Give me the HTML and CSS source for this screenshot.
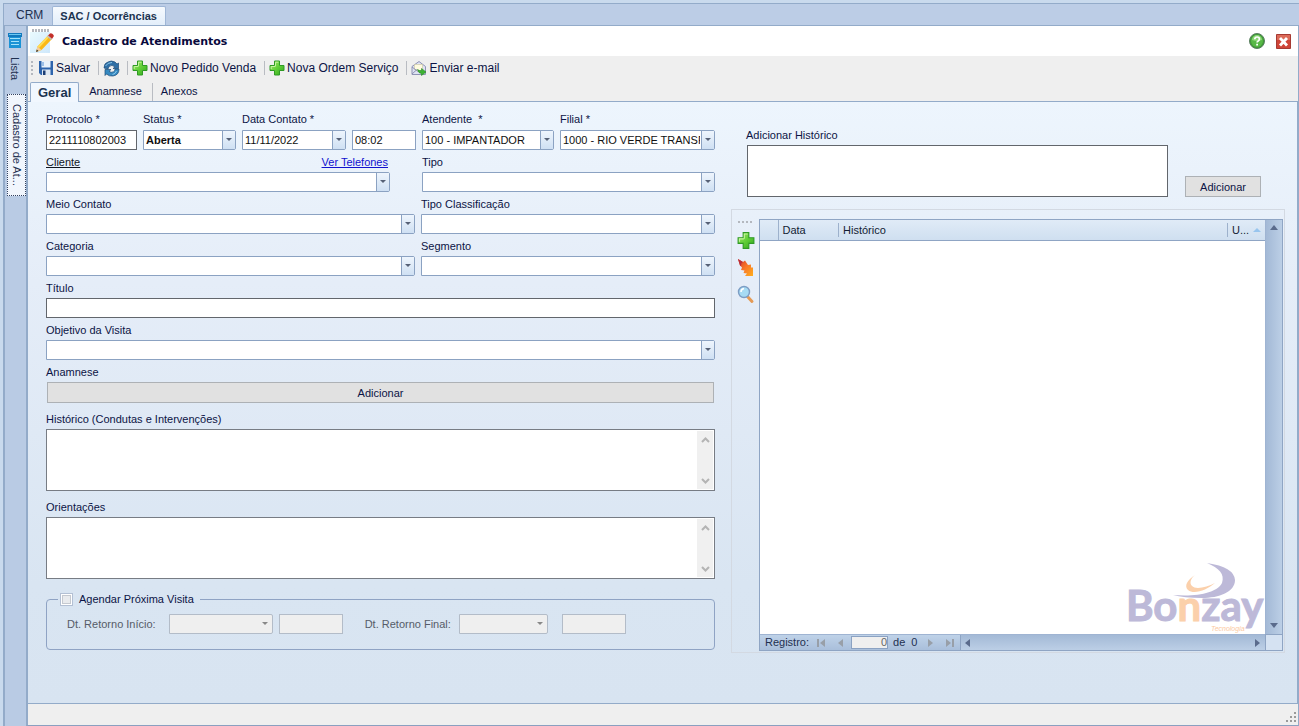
FILE: index.html
```html
<!DOCTYPE html>
<html lang="pt-BR">
<head>
<meta charset="utf-8">
<title>Cadastro de Atendimentos</title>
<link rel="stylesheet" href="styles.css">
</head>
<body>
<svg class="defs" aria-hidden="true">
  <defs>
    <linearGradient id="green" x1="0" y1="0" x2="1" y2="1"><stop offset="0" stop-color="#a5e86a"/><stop offset="0.5" stop-color="#62cf38"/><stop offset="1" stop-color="#2fa51c"/></linearGradient>
    <linearGradient id="fire" x1="0" y1="0" x2="1" y2="1"><stop offset="0" stop-color="#d8352a"/><stop offset="0.5" stop-color="#f8782a"/><stop offset="1" stop-color="#ffae1c"/></linearGradient>
    <linearGradient id="sky" x1="0" y1="0" x2="1" y2="1"><stop offset="0" stop-color="#e9fafe"/><stop offset="1" stop-color="#cfe8fb"/></linearGradient>
    <symbol id="plus" viewBox="0 0 16 16"><path d="M5.5 1h5v4.500H15v5h-4.500V15h-5v-4.500H1v-5h4.500z" fill="url(#green)" stroke="#2f9a24"/><path d="M6.500 6.500V2.200h3M2.200 9V6.500H6" fill="none" stroke="#c4f39c"/></symbol>
  </defs>
</svg>
<div class="app">
  <nav class="module-tabs">
    <button class="module-tab">CRM</button>
    <button class="module-tab active">SAC / Ocorrências</button>
  </nav>
  <div class="workspace">
    <nav class="side">
      <button class="side-tab">
        <svg width="14" height="15" viewBox="0 0 14 15"><path d="M0 0h14v4H0z" fill="#1479bd"/><path d="M1 1h12v1H1z" fill="#6cc9f2"/><path d="M1 4h12v11H1z" fill="#1b93d6"/><path d="M2 5h10v1H2zM3 8h8v1H3zM3 11h8v1H3z" fill="#a4e2fa"/></svg>
        <span>Lista</span>
      </button>
      <button class="side-tab active"><span>Cadastro de At...</span></button>
    </nav>
    <main class="main">
      <header class="title-bar">
        <div class="title-icon">
          <i class="grip-h"></i>
          <svg width="24" height="22" viewBox="0 0 24 22"><path d="M0 0h20v21H0z" fill="url(#sky)"/><path d="M6 20 7.500 14.500 18 3.500l4 3.500L11.500 18z" fill="#fbb816"/><path d="M7.500 14.500 18 3.500l1.500 1.300L9 16z" fill="#ffdd55"/><path d="m18 3.500 2-2q1-.8 2.300.2l1 1q1 1.200 0 2.300L22 7z" fill="#c3302a"/><path d="m17 4.500 1-1L22 7l-1 1z" fill="#b9bcc4"/><path d="m6 20 1.500-5.500 4 3.500z" fill="#f3cfa0"/><path d="m6 20 .8-2.600 1.800 1.700z" fill="#333"/></svg>
        </div>
        <h1>Cadastro de Atendimentos</h1>
        <button class="icon-btn" aria-label="Ajuda"><svg width="16" height="16" viewBox="0 0 16 16"><circle cx="8" cy="8" r="7.500" fill="#3f9a35" stroke="#5b7f63"/><circle cx="8" cy="8" r="6" fill="#58b847"/><path d="M3 7a5 5 0 0 1 10 0q-5 2-10 0z" fill="#8bd677"/><path d="M5.800 6.300q0-2.300 2.300-2.300t2.300 2q0 1.200-1.200 1.900-1.100.6-1.100 1.600" fill="none" stroke="#fff" stroke-width="1.700"/><path d="M7.200 10.800H9v1.700H7.200z" fill="#fff"/></svg></button>
        <button class="icon-btn" aria-label="Fechar"><svg width="15" height="15" viewBox="0 0 15 15"><path d="M.5.5h14v14H.5z" fill="#cf4437" stroke="#a63a33"/><path d="M1 1h13v5H1z" fill="#dc6a58"/><path d="m4 4 7 7.500M11 4l-7 7.500" stroke="#fff" stroke-width="2.800"/></svg></button>
      </header>
      <div class="toolbar">
        <i class="grip-v"></i>
        <button><svg width="16" height="16" viewBox="0 0 16 16"><path d="M1 1h14v14H3l-2-2z" fill="#2d64ad"/><path d="M3.500 1h9v6.500h-9z" fill="#e9f2fb"/><path d="M4 2h2v4H4z" fill="#9dc0e8"/><path d="M4 9.500h8.500V15H4z" fill="#dfe8f2"/><path d="M5 10.500h2.500V15H5z" fill="#1c3e75"/></svg>Salvar</button>
        <i class="sep"></i>
        <button aria-label="Atualizar"><svg width="17" height="17" viewBox="0 0 17 17"><path d="M1 8Q1 3 5 2q3-2 7 0l2 2 1.500-1v5.500H10L12 7Q9 4 6 6.500L5 9z" fill="#2e6fa6" stroke="#1c4a77" stroke-width=".7"/><path d="M16 9q0 6-6 7-4 .5-6.500-2L2 15.500V9.500h6l-2 1.800q2 1.800 4.500.5Q12 11 12 9z" fill="#3589c0" stroke="#1c4a77" stroke-width=".7"/><path d="M2.500 6Q4.500 2.500 9 2.500M13.500 11q-1 3-4 3.500" stroke="#8dc8ec" fill="none"/></svg></button>
        <i class="sep"></i>
        <button><svg width="16" height="16"><use href="#plus"/></svg>Novo Pedido Venda</button>
        <i class="sep"></i>
        <button><svg width="16" height="16"><use href="#plus"/></svg>Nova Ordem Serviço</button>
        <i class="sep"></i>
        <button><svg width="16" height="16" viewBox="0 0 16 16"><path d="M1 6.500 8 1.500l6.500 5v8H1z" fill="#dfe3f4" stroke="#8f93b4"/><path d="M3.500 4.500h8v5l-4 2-4-2z" fill="#fffbe0" stroke="#c9c49a" stroke-width=".6"/><path d="m1 14 5-4.500M1 7l6 4.500" stroke="#8f93b4" fill="none"/><path d="M6.500 9.500q2 1.500 4 1V8.500l4.500 3.500-4.500 3.500v-2q-3 0-4-4z" fill="#3cb233" stroke="#258a22" stroke-width=".6"/></svg>Enviar e-mail</button>
      </div>
      <nav class="page-tabs">
        <button class="active">Geral</button>
        <button>Anamnese</button>
        <i class="sep"></i>
        <button>Anexos</button>
      </nav>
      <section class="page">
        <form class="form">
          <div class="row row-ids">
            <div class="field"><label for="prot">Protocolo *</label><input id="prot" class="box dark" value="2211110802003"></div>
            <div class="field"><label for="status">Status *</label><div class="combo"><select id="status" class="strong"><option>Aberta</option></select><i class="drop"></i></div></div>
            <div class="field"><label for="data">Data Contato *</label><div class="combo"><input id="data" value="11/11/2022"><i class="drop"></i></div></div>
            <div class="field"><label></label><input class="box" aria-label="Hora" value="08:02"></div>
            <div class="field"><label for="atend">Atendente &nbsp;*</label><div class="combo"><select id="atend"><option>100 - IMPANTADOR</option></select><i class="drop"></i></div></div>
            <div class="field"><label for="filial">Filial *</label><div class="combo"><select id="filial"><option>1000 - RIO VERDE TRANSF</option></select><i class="drop"></i></div></div>
          </div>
          <div class="row row-client">
            <div class="field"><div class="label-line"><label for="cliente" class="underlined">Cliente</label><a href="#">Ver Telefones</a></div><div class="combo"><select id="cliente"></select><i class="drop"></i></div></div>
            <div class="field"><label for="tipo">Tipo</label><div class="combo"><select id="tipo"></select><i class="drop"></i></div></div>
          </div>
          <div class="row row-pair">
            <div class="field"><label for="meio">Meio Contato</label><div class="combo"><select id="meio"></select><i class="drop"></i></div></div>
            <div class="field"><label for="classif">Tipo Classificação</label><div class="combo"><select id="classif"></select><i class="drop"></i></div></div>
          </div>
          <div class="row row-pair">
            <div class="field"><label for="categ">Categoria</label><div class="combo"><select id="categ"></select><i class="drop"></i></div></div>
            <div class="field"><label for="segm">Segmento</label><div class="combo"><select id="segm"></select><i class="drop"></i></div></div>
          </div>
          <div class="field"><label for="titulo">Título</label><input id="titulo" class="box dark"></div>
          <div class="field"><label for="obj">Objetivo da Visita</label><div class="combo"><select id="obj"></select><i class="drop"></i></div></div>
          <div class="field"><label for="anam">Anamnese</label><button type="button" id="anam" class="push">Adicionar</button></div>
          <div class="field tall"><label for="hist">Histórico (Condutas e Intervenções)</label>
            <div class="memo"><textarea id="hist"></textarea><div class="memo-scroll"><svg width="9" height="6"><path d="m1 5 3.500-3.500L8 5"/></svg><svg width="9" height="6"><path d="m1 1 3.500 3.500L8 1"/></svg></div></div></div>
          <div class="field tall"><label for="orient">Orientações</label>
            <div class="memo"><textarea id="orient"></textarea><div class="memo-scroll"><svg width="9" height="6"><path d="m1 5 3.500-3.500L8 5"/></svg><svg width="9" height="6"><path d="m1 1 3.500 3.500L8 1"/></svg></div></div></div>
          <fieldset class="schedule">
            <legend><input type="checkbox" id="agendar"><label for="agendar">Agendar Próxima Visita</label></legend>
            <div class="schedule-row">
              <label for="ini">Dt. Retorno Início:</label>
              <div class="combo off wide"><input id="ini" disabled><i class="drop"></i></div>
              <input class="box off" aria-label="Hora início" disabled>
              <label for="fim" class="second">Dt. Retorno Final:</label>
              <div class="combo off"><input id="fim" disabled><i class="drop"></i></div>
              <input class="box off last" aria-label="Hora final" disabled>
            </div>
          </fieldset>
        </form>
        <section class="history">
          <label for="novo">Adicionar Histórico</label>
          <div class="history-add">
            <textarea id="novo"></textarea>
            <button class="push">Adicionar</button>
          </div>
          <div class="group">
            <div class="tools">
              <i class="grip-h"></i>
              <button aria-label="Incluir"><svg width="18" height="19"><use href="#plus" width="18" height="19"/></svg></button>
              <button aria-label="Excluir"><svg width="18" height="19" viewBox="0 0 18 19"><path d="M1 1 6 4 8 2.500 11 7 14 6.500 14 9.500 16 9.500V18H8L10 15.500 6.500 15 7.500 12.500 4 12 5 9.500 3 7.500z" fill="url(#fire)"/><path d="M1 1 6 4 4.500 5 4 8 3 7.500z" fill="#b92f3a"/></svg></button>
              <button aria-label="Pesquisar"><svg width="18" height="19" viewBox="0 0 18 19"><path d="m10 11 5 5.500" stroke="#e59a55" stroke-width="3" stroke-linecap="round"/><circle cx="7" cy="7" r="5.500" fill="#a7dbf4" stroke="#7d9dc4" stroke-width="1.400"/><path d="M4 7q0-3 3-3.500" stroke="#fff" stroke-width="1.500" fill="none"/></svg></button>
            </div>
            <div class="grid">
              <div class="grid-body">
                <table>
                  <thead><tr><th class="c-mark"></th><th class="c-date"><span>Data</span></th><th><span>Histórico</span></th><th class="c-user"><span>U...</span><i class="tri up pale"></i></th></tr></thead>
                </table>
                <div class="brand">
                  <svg width="138" height="74" viewBox="0 0 138 74" role="img" aria-label="Bonzay Tecnologia">
                    <path d="M80 3Q107 7 108 20C108 32 92 38 75 38Q57 38 46 35C70 37 90 33 95 23C98 14 92 8 80 3z" fill="#bdb9d8"/>
                    <path d="M68 15C60 20 57 26 61 30C67 35 80 30 88 23C80 27 69 30 65 26C62 23 64 18 68 15z" fill="#fbd0ab"/>
                    <text x="-1" y="61" class="brand-name">Bo<tspan class="peach">n</tspan>zay</text>
                    <text x="84" y="71" class="brand-sub">Tecnologia</text>
                  </svg>
                </div>
              </div>
              <div class="vscroll"><i class="tri up"></i><i class="tri down"></i></div>
              <div class="grid-foot">
                <div class="navigator">
                  <label for="reg">Registro:</label>
                  <button aria-label="Primeiro"><svg width="9" height="8"><path d="M0 0h2v8H0zM8 0v8L3 4z"/></svg></button>
                  <button aria-label="Anterior"><svg width="5" height="8"><path d="M5 0v8L0 4z"/></svg></button>
                  <input id="reg" value="0">
                  <span>de</span><span>0</span>
                  <button aria-label="Próximo"><svg width="5" height="8"><path d="M0 0v8l5-4z"/></svg></button>
                  <button aria-label="Último"><svg width="9" height="8"><path d="M7 0h2v8H7zM1 0v8l5-4z"/></svg></button>
                </div>
                <div class="hscroll"><i class="tri left"></i><i class="tri right"></i></div>
              </div>
              <div class="corner"></div>
            </div>
          </div>
        </section>
      </section>
      <footer class="status-bar"><svg width="12" height="12"><path d="M8 0h2v2H8zM8 4h2v2H8zM8 8h2v2H8zM4 4h2v2H4zM4 8h2v2H4zM0 8h2v2H0z" fill="#9a9a9a"/></svg></footer>
    </main>
  </div>
</div>
</body>
</html>
```

FILE: styles.css
```css
* { box-sizing: border-box; }
body {
  margin: 0;
  background: #c9daed;
  color: #0c1445;
  font: 11px/20px "Liberation Sans", Arial, sans-serif;
}
button, input, select, textarea {
  margin: 0;
  padding: 0;
  border: 0;
  border-radius: 0;
  background: none;
  color: inherit;
  font: inherit;
  outline: 0;
}
textarea { resize: none; display: block; }
svg { display: block; flex: none; }
i { display: block; flex: none; }
.defs { position: absolute; width: 0; height: 0; }

.app {
  display: flex;
  flex-direction: column;
  min-height: 100vh;
  padding: 3px 0 0 3px;
}
.module-tabs {
  display: flex;
  height: 22px;
  padding-top: 2px;
  border-top: 1px solid #93abc9;
  border-left: 1px solid #93abc9;
  background: #bccde6;
}
.module-tab { padding: 0 9px 0 12px; font-size: 12px; line-height: 19px; color: #1f3050; }
.module-tab.active {
  padding: 0 8px 0 7px;
  border: 1px solid #9fb6d6;
  border-bottom: 0;
  border-radius: 2px 2px 0 0;
  background: linear-gradient(#f6fafe, #e3eefa);
  color: #1b3350;
  font-size: 11px;
  font-weight: bold;
}
.workspace { display: flex; flex: 1; border-left: 2px solid #93abc9; background: #b9cbe4; }
.side {
  display: flex;
  flex-direction: column;
  width: 21px;
  border-top: 1px solid #93abc9;
  gap: 14px;
}
.side-tab {
  display: flex;
  flex-direction: column;
  align-items: center;
  gap: 9px;
  margin-left: 2px;
  padding: 7px 3px 0 0;
  color: #1f3050;
}
.side-tab span { writing-mode: vertical-rl; line-height: 18px; }
.side-tab.active {
  padding: 9px 0;
  border: 1px dotted #33415f;
  background: #f1f6fd;
}
.main {
  display: flex;
  flex: 1;
  flex-direction: column;
  min-width: 0;
  border: 1px solid #93abc9;
  border-left-width: 2px;
  border-bottom-color: #8aa0c0;
}

.title-bar { display: flex; align-items: center; height: 30px; padding: 0 7px 0 2px; background: #fff; }
.title-bar h1 {
  flex: 1;
  margin: 0 0 0 8px;
  color: #08083c;
  font: bold 11px/20px "DejaVu Sans", Verdana, sans-serif;
  padding-top: 2px;
}
.icon-btn + .icon-btn { margin-left: 11px; }
.grip-h { width: 18px; height: 3px; background: repeating-linear-gradient(90deg, #b4b8bf 0 2px, transparent 2px 3px); }
.title-icon .grip-h { margin-left: 2px; }
.toolbar { display: flex; align-items: center; height: 24px; padding-left: 3px; background: #efefef; }
.toolbar button { display: flex; align-items: center; gap: 2px; font-size: 12px; }
.toolbar .sep { width: 1px; height: 14px; margin: 0 4px 0 8px; background: #b9bcc2; }
.toolbar button[aria-label] + .sep { margin-left: 7px; }
.grip-v { width: 2px; height: 15px; margin-right: 5px; background: repeating-linear-gradient(#b4b8bf 0 2px, transparent 2px 4px); }

.page-tabs { display: flex; align-items: flex-end; height: 21px; padding-left: 2px; background: #efefef; }
.page-tabs button { padding: 0 10px; line-height: 19px; }
.page-tabs .active {
  margin-bottom: -1px;
  padding: 0 7px;
  border: 1px solid #93abc9;
  border-bottom: 0;
  border-radius: 2px 2px 0 0;
  background: #f1f7fe;
  color: #1b3350;
  font-size: 13px;
  font-weight: bold;
  position: relative;
}
.page-tabs .sep { width: 1px; height: 18px; margin: 0 -2px 0 0; background: #b9bcc2; }

.page {
  display: grid;
  flex: 1;
  grid-template-columns: 669fr 554fr;
  gap: 16px;
  padding: 8px 12px 50px 18px;
  border-top: 1px solid #93abc9;
  border-right: 1px solid #93abc9;
  border-bottom: 1px solid #93abc9;
  background: linear-gradient(#edf5fd, #e5edf8 30%, #d9e5f2 80%, #d8e4f1);
}
.form { display: flex; flex-direction: column; gap: 2px; min-width: 0; }
.row { display: grid; gap: 6px; }
.row-ids { grid-template-columns: 91fr 93fr 104fr 64fr 132fr 155fr; }
.row-ids label { line-height: 18px; }
.row-client { grid-template-columns: 344fr 293fr; gap: 32px; }
.row-pair { grid-template-columns: 369fr 294fr; }
.field { display: flex; flex-direction: column; min-width: 0; }
.field > label { height: 20px; white-space: nowrap; }
.label-line { display: flex; justify-content: space-between; padding-right: 2px; }
.underlined { text-decoration: underline; color: #10151f; }
a { color: #1212cf; }
.tall { margin-top: 4px; }

.box, .combo {
  width: 100%;
  height: 20px;
  border: 1px solid #8ba2c2;
  background: #fff;
  color: #101010;
}
.box { padding: 0 2px; }
.dark { border-color: #62666c; }
.combo { position: relative; border-radius: 0 2px 2px 0; }
.combo select, .combo input {
  display: block;
  width: 100%;
  height: 18px;
  padding: 0 14px 0 2px;
  appearance: none;
  line-height: 17px;
  text-overflow: clip;
}
.combo .strong { font-weight: bold; }
.drop {
  position: absolute;
  top: 0;
  right: 0;
  width: 13px;
  height: 18px;
  border-left: 1px solid #8ba2c2;
  background: linear-gradient(#eef5fd, #cfe0f3);
  pointer-events: none;
}
.drop::after {
  content: "";
  position: absolute;
  top: 7px;
  left: 3px;
  border: 3px solid transparent;
  border-top-color: #566176;
  border-bottom: 0;
}
.push { height: 21px; border: 1px solid #adb1b5; background: #e1e1e1; line-height: 18px; }
.field .push { margin: 0 1px; }
.memo { display: flex; height: 62px; padding: 1px; border: 1px solid #777c84; background: #fff; }
.memo textarea { flex: 1; min-width: 0; }
.memo-scroll {
  display: flex;
  flex-direction: column;
  justify-content: space-between;
  align-items: center;
  width: 16px;
  padding: 6px 0 5px;
  background: #f0f0f0;
}
.memo-scroll path { fill: none; stroke: #b4b4b4; stroke-width: 2; }

.schedule {
  min-width: 0;
  margin: 8px 0 0;
  padding: 0 20px 15px;
  border: 1px solid #8fa3c4;
  border-radius: 4px;
}
.schedule legend { display: flex; align-items: center; height: 20px; margin-left: -9px; padding-right: 6px; }
.schedule legend label { margin-left: 6px; }
.schedule legend input {
  width: 13px;
  height: 13px;
  appearance: none;
  border: 1px solid #b3c0d4;
  background: #e9ebee;
  box-shadow: inset 0 0 0 1px #fff, inset 0 0 0 2px #c5c9d0;
}
.schedule-row { display: flex; align-items: center; margin-top: 5px; color: #565c68; }
.schedule-row .combo { width: 89px; margin-left: 8px; }
.schedule-row .wide { width: 104px; margin-left: 13px; }
.schedule-row .box { width: 64px; margin-left: 6px; }
.schedule-row .last { margin-left: 14px; }
.schedule-row .second { margin-left: 22px; }
.off { border-color: #b3bcc8; background: #efefef; }
.off .drop { border: 0; background: none; }
.off .drop::after { border-top-color: #888; }

.history { display: flex; flex-direction: column; min-width: 0; padding-top: 15px; }
.history > label { margin-left: 15px; }
.history-add { display: flex; align-items: flex-end; gap: 17px; margin: 0 24px 12px 16px; }
.history-add textarea { flex: 1; min-width: 0; height: 52px; border: 1px solid #62666c; background: #fff; }
.history-add .push { width: 76px; }
.group { display: flex; flex: 1; padding: 9px 1px 1px 0; border: 1px solid #d3d9e2; }
.tools { display: flex; flex-direction: column; align-items: center; gap: 8px; width: 27px; padding-top: 2px; }
.tools .grip-h { width: 15px; height: 2px; background: repeating-linear-gradient(90deg, #b4b8bf 0 2px, transparent 2px 4px); }
.grid {
  display: grid;
  flex: 1;
  grid-template-columns: 1fr 17px;
  grid-template-rows: 1fr 16px;
  border: 1px solid #8fa5c4;
}
.grid-body { position: relative; background: #fff; }
table { width: 100%; border-collapse: collapse; table-layout: fixed; }
thead { background: linear-gradient(#e0ebf7, #cfdff0); }
th {
  height: 20px;
  padding: 0;
  border-bottom: 1px solid #8fa5c4;
  color: #131c33;
  font-weight: normal;
  line-height: 19px;
  text-align: left;
}
th span { display: inline-block; height: 14px; line-height: 14px; padding-left: 4px; border-left: 1px solid #9db1cc; vertical-align: middle; }
.c-mark { width: 18px; border-right: 1px solid #9db1cc; }
.c-date { width: 60px; }
.c-date span { padding-left: 3px; border-left-color: transparent; }
.c-user { width: 38px; }
.c-user .tri { display: inline-block; margin-left: 4px; vertical-align: middle; }
.tri { border: 4px solid transparent; }
.tri.up { border-top: 0; border-bottom: 5px solid #5a6b8c; }
.tri.down { border-bottom: 0; border-top: 5px solid #5a6b8c; }
.tri.left { border-left: 0; border-right: 5px solid #5a6b8c; }
.tri.right { border-right: 0; border-left: 5px solid #5a6b8c; }
.tri.up.pale { border-bottom: 4px solid #98c5ee; }
.brand { position: absolute; right: 0; bottom: 0; }
.brand svg { overflow: visible; }
.brand-name { fill: #bdb9d8; stroke: #bdb9d8; stroke-width: 1px; font: bold 42px Lato, sans-serif; }
.peach { fill: #fbd0ab; stroke: #fbd0ab; }
.brand-sub { fill: #fbc99f; font: italic 7px "Liberation Sans", sans-serif; }
.vscroll {
  display: flex;
  flex-direction: column;
  justify-content: space-between;
  align-items: center;
  padding: 5px 0 6px;
  border-left: 1px solid #9fb4d2;
  background: linear-gradient(90deg, #a3b9d6, #bccfe6);
}
.grid-foot { display: flex; border-top: 1px solid #9fb4d2; }
.navigator {
  display: flex;
  align-items: center;
  width: 201px;
  padding-left: 5px;
  border-right: 1px solid #8fa5c4;
  background: linear-gradient(#bfd2e8, #a9bfdb);
  color: #1f3050;
  line-height: 15px;
}
.navigator path { fill: #989fa8; }
.navigator button { margin-left: 8px; }
.navigator button + button { margin-left: 12px; }
.navigator input { width: 37px; height: 13px; margin-left: 8px; border: 1px solid #8ba2c2; background: #efefef; text-align: right; color: #666; }
.navigator span { margin-left: 5px; }
.navigator span + span { margin-left: 6px; }
.navigator span + button { margin-left: 11px; }
.hscroll {
  display: flex;
  flex: 1;
  justify-content: space-between;
  align-items: center;
  padding: 0 5px 0 4px;
  background: linear-gradient(#a3b9d6, #bccfe6);
}
.corner { border-top: 1px solid #8fa5c4; border-left: 1px solid #8fa5c4; background: #d5e2f2; }
.status-bar { display: flex; justify-content: flex-end; align-items: flex-end; height: 21px; padding: 0 0 1px; background: #efefef; }
```
